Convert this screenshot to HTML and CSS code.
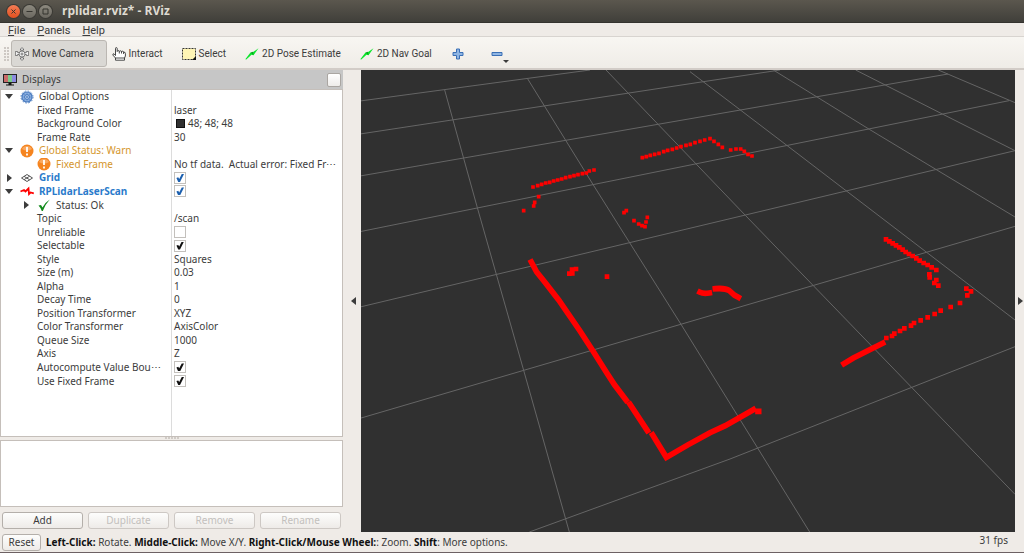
FILE: index.html
```html
<!DOCTYPE html>
<html lang="en">
<head>
    <meta charset="UTF-8">
    <meta name="viewport" content="width=device-width, initial-scale=1.0">
    <title>rplidar.rviz* - RViz</title>
    <link rel="stylesheet" href="styles.css">
</head>
<body>
    <header class="titlebar">
        <button class="win close" aria-label="Close"><svg viewBox="0 0 13 13"><path d="M4.5 4.5l4 4M8.5 4.5l-4 4"/></svg></button>
        <button class="win" aria-label="Minimize"><svg viewBox="0 0 13 13"><path d="M3.5 6.5h6"/></svg></button>
        <button class="win" aria-label="Maximize"><svg viewBox="0 0 13 13"><path d="M4 4h5v5h-5z"/></svg></button>
        <h1>rplidar.rviz* - RViz</h1>
    </header>

    <nav class="menubar">
        <a href="#"><u>F</u>ile</a>
        <a href="#"><u>P</u>anels</a>
        <a href="#"><u>H</u>elp</a>
    </nav>

    <div class="toolbar">
        <span class="grip"></span>
        <button class="tool active">
            <svg viewBox="0 0 14 14" fill="#eee" stroke="#555" stroke-width=".7"><path d="M7 .6L9 2.500H8V4H6V2.500H5zM7 13.400L9 11.500H8V10H6v1.500H5z"/><path d="M.4 4.500h2.200v1H4.500v2H2.600v1H.4zM13.600 4.500h-2.200v1H9.500v2h1.900v1h2.200z"/><circle cx="7" cy="7" r="3"/><circle cx="7" cy="7" r="1"/></svg>
            Move Camera
        </button>
        <button class="tool">
            <svg viewBox="0 0 14 14" fill="#fff" stroke="#333" stroke-width=".9"><path d="M3.500 8.500V1.500Q3.500.6 4.300.6T5.200 1.500V4.500Q5.400 3.600 6.300 3.600T7.300 4.500Q7.500 3.800 8.400 3.800T9.500 4.700Q9.800 4.200 10.600 4.200T11.600 5.200Q13.400 4.800 13.400 6.500V9L12.500 11V13.200H3.500V11L.8 8Q.8 6.500 2 6.800z"/><path d="M7.300 4.500v2M9.500 4.500v2M11.600 5v2M3.500 11h9"/></svg>
            Interact
        </button>
        <button class="tool">
            <svg viewBox="0 0 14 14"><path d="M.5 1.500h13v11h-13z" fill="#fff5b5" stroke="#333" stroke-dasharray="2 1"/><path d="M14 9v4H10z" fill="#111"/></svg>
            Select
        </button>
        <button class="tool">
            <svg viewBox="0 0 14 14"><path d="M.3 12.300L5.500 5.600 6.700 6 13.500 1.300 8.500 8.200 6.500 7.800 1.300 12.600z" fill="#0be52b"/><path d="M5.500 5.600l3 2.600-.6-3.400z" fill="#0aa51f"/></svg>
            2D Pose Estimate
        </button>
        <button class="tool">
            <svg viewBox="0 0 14 14"><path d="M.3 12.300L5.500 5.600 6.700 6 13.500 1.300 8.500 8.200 6.500 7.800 1.300 12.600z" fill="#0be52b"/><path d="M5.500 5.600l3 2.600-.6-3.400z" fill="#0aa51f"/></svg>
            2D Nav Goal
        </button>
        <button class="tool plus" aria-label="Add tool">
            <svg viewBox="0 0 14 14"><path d="M5.500 2h3v3.500H12v3H8.500V12h-3V8.500H2v-3h3.500z" fill="#8fb5e3" stroke="#3a6fb5"/></svg>
        </button>
        <button class="tool minus" aria-label="Remove tool">
            <svg viewBox="0 0 14 14"><path d="M2 5.500h10v3H2z" fill="#8fb5e3" stroke="#3a6fb5"/></svg>
            <span class="drop"></span>
        </button>
    </div>

    <main class="workspace">
        <section class="displays">
            <div class="dock-title">
                <svg viewBox="0 0 14 14"><path d="M0 1h14v9H0z" fill="#222"/><path d="M1 2h4v7H1z" fill="#c96a6a"/><path d="M5 2h4v7H5z" fill="#7cc98a"/><path d="M9 2h4v7H9z" fill="#8a8ae0"/><path d="M5.500 10h3v1.500h2.500v1H3v-1h2.500z" fill="#111"/></svg>
                <h2>Displays</h2>
                <button class="float" aria-label="Close panel"></button>
            </div>

            <div class="tree">
                <table>
                    <tbody>
                        <tr>
                            <td><div class="item"><i class="arrow open"></i><svg viewBox="0 0 14 14"><circle cx="7" cy="7" r="5" fill="#8fb2e2" stroke="#4b7cc0" stroke-width="1.200"/><circle cx="7" cy="7" r="6" fill="none" stroke="#4b7cc0" stroke-dasharray="1.600 1.540"/><circle cx="7" cy="7" r="2.500" fill="#c7d9f2" stroke="#4b7cc0"/><path d="M7 2v10M2 7h10M3.500 3.500l7 7M10.500 3.500l-7 7" stroke="#4b7cc0" stroke-width=".5"/></svg>Global Options</div></td>
                            <td></td>
                        </tr>
                        <tr><td><div class="item leaf">Fixed Frame</div></td><td>laser</td></tr>
                        <tr><td><div class="item leaf">Background Color</div></td><td><i class="swatch"></i>48; 48; 48</td></tr>
                        <tr><td><div class="item leaf">Frame Rate</div></td><td>30</td></tr>
                        <tr class="warn">
                            <td><div class="item"><i class="arrow open"></i><svg viewBox="0 0 14 14"><circle cx="7" cy="7" r="6.500" fill="#f5841f"/><path d="M2 5a5.500 5 0 0 1 10 0q-5 3-10 0z" fill="#f9a860"/><path d="M7 3v5M7 9.500v2" stroke="#fff" stroke-width="1.800"/></svg>Global Status: Warn</div></td>
                            <td></td>
                        </tr>
                        <tr class="warn">
                            <td><div class="item child"><i class="arrow"></i><svg viewBox="0 0 14 14"><circle cx="7" cy="7" r="6.500" fill="#f5841f"/><path d="M2 5a5.500 5 0 0 1 10 0q-5 3-10 0z" fill="#f9a860"/><path d="M7 3v5M7 9.500v2" stroke="#fff" stroke-width="1.800"/></svg>Fixed Frame</div></td>
                            <td>No tf data.&nbsp; Actual error: Fixed Fr⋯</td>
                        </tr>
                        <tr class="display">
                            <td><div class="item"><i class="arrow closed"></i><svg viewBox="0 0 14 14" fill="none" stroke="#555"><path d="M1.500 7L7 3.500 12.500 7 7 10.500zM4 5.300l5.700 3.500M4 8.700l5.700-3.500"/></svg><label for="grid">Grid</label></div></td>
                            <td><input type="checkbox" id="grid" checked></td>
                        </tr>
                        <tr class="display">
                            <td><div class="item"><i class="arrow open"></i><svg viewBox="0 0 14 14" fill="none" stroke="#f00" stroke-width="1.800"><path d="M.5 7.500L4 6 5.500 7.500 8.500 4.500 9 10 10.500 8.500 13.800 9.500"/></svg><label for="scan">RPLidarLaserScan</label></div></td>
                            <td><input type="checkbox" id="scan" checked></td>
                        </tr>
                        <tr>
                            <td><div class="item child"><i class="arrow closed"></i><svg viewBox="0 0 14 14"><path d="M1.500 7.500L4 7 5.500 9.500Q8.500 4 12.800 1.500 8.500 6 5.800 13H4.800Q3.500 9.500 1.500 7.500z" fill="#128a1c"/></svg>Status: Ok</div></td>
                            <td></td>
                        </tr>
                        <tr><td><div class="item leaf">Topic</div></td><td>/scan</td></tr>
                        <tr><td><div class="item leaf"><label for="unreliable">Unreliable</label></div></td><td><input type="checkbox" id="unreliable"></td></tr>
                        <tr><td><div class="item leaf"><label for="selectable">Selectable</label></div></td><td><input type="checkbox" id="selectable" checked></td></tr>
                        <tr><td><div class="item leaf">Style</div></td><td>Squares</td></tr>
                        <tr><td><div class="item leaf">Size (m)</div></td><td>0.03</td></tr>
                        <tr><td><div class="item leaf">Alpha</div></td><td>1</td></tr>
                        <tr><td><div class="item leaf">Decay Time</div></td><td>0</td></tr>
                        <tr><td><div class="item leaf">Position Transformer</div></td><td>XYZ</td></tr>
                        <tr><td><div class="item leaf">Color Transformer</div></td><td>AxisColor</td></tr>
                        <tr><td><div class="item leaf">Queue Size</div></td><td>1000</td></tr>
                        <tr><td><div class="item leaf">Axis</div></td><td>Z</td></tr>
                        <tr><td><div class="item leaf"><label for="bounds">Autocompute Value Bou⋯</label></div></td><td><input type="checkbox" id="bounds" checked></td></tr>
                        <tr><td><div class="item leaf"><label for="fixed">Use Fixed Frame</label></div></td><td><input type="checkbox" id="fixed" checked></td></tr>
                    </tbody>
                </table>
            </div>
            <div class="handle"></div>
            <div class="description"></div>
            <div class="actions">
                <button>Add</button>
                <button disabled>Duplicate</button>
                <button disabled>Remove</button>
                <button disabled>Rename</button>
            </div>
        </section>

        <button class="collapse left" aria-label="Hide left dock"></button>

        <svg class="view" viewBox="3 0 1962 1386" preserveAspectRatio="xMidYMid slice">
            <!-- ground grid -->
            <g class="grid">
                <path d="M0 93L690 0M0 192L1260 0M0 318L1764 12M0 485L1947 92M0 711L1965 242M0 1045L1965 469M508 1386L1110 1167 1965 830"/>
                <path d="M254 60L352 413 491 901 628 1386M502 25L700 345 963 763 1349 1386M738 0L1157 437 1360 647 1965 1273M990 5L1283 228 1700 547 1965 750M1240 0L1528 178 1965 441M1487 0L1747 132 1965 242M1735 0L1965 98"/>
            </g>
            <!-- laser scan -->
            <g class="scan far">
                <path d="M519 351h0M533 347h0M545 343h0M557 339h0M569 337h0M581 333h0M593 330h0M605 327h0M617 323h0M630 320h0M642 317h0M654 314h0M667 311h0M679 309h0M688 303h0M702 300h0"/>
                <path d="M536 380h0M524 397h0M521 408h0M491 422h0M799 422h0M792 428h0M822 452h0M836 462h0M846 467h0M855 470h0M858 456h0M862 442h0"/>
                <path d="M847 263h0M859 260h0M871 256h0M884 253h0M897 250h0M911 245h0M923 241h0M937 238h0M950 234h0M963 230h0M978 226h0M991 223h0M1005 218h0M1020 214h0M1034 210h0M1050 206h0M1062 214h0M1075 223h0M1087 232h0M1112 240h0M1128 237h0M1142 237h0M1153 244h0M1164 253h0M1176 258h0"/>
            </g>
            <g class="scan mid">
                <path d="M648 597h0M636 599h0M637 610h0M628 611h0M741 620h0"/>
                <path d="M1578 508h0M1588 514h0M1598 520h0M1608 526h0M1618 532h0M1628 539h0M1637 546h0M1647 552h0M1658 558h0M1669 565h0M1679 572h0M1691 579h0M1703 585h0M1715 592h0M1729 600h0M1708 613h0M1709 622h0M1729 630h0M1723 639h0M1735 647h0"/>
                <path d="M1819 656h0M1833 664h0M1822 676h0M1800 699h0M1772 711h0M1742 722h0M1724 732h0M1703 742h0M1682 751h0M1662 759h0M1653 767h0M1633 775h0M1620 783h0M1603 791h0M1596 798h0M1579 804h0"/>
            </g>
            <g class="scan near">
                <path d="M514 576L530 606 556 638 596 690 660 783 697 840 740 908 764 945 798 990M810 1003L862 1082M878 1095L919 1162 985 1124 1050 1088 1096 1067 1180 1019M1194 1024h2"/>
                <path d="M1020 667Q1030 672 1048 669M1066 656Q1095 653 1108 662L1124 676 1135 682M1452 881L1480 864 1568 820"/>
            </g>
        </svg>

        <button class="collapse right" aria-label="Hide right dock"></button>
    </main>

    <footer class="status">
        <button>Reset</button>
        <p><b>Left-Click:</b> Rotate. <b>Middle-Click:</b> Move X/Y. <b>Right-Click/Mouse Wheel:</b>: Zoom. <b>Shift</b>: More options.</p>
        <span class="fps">31 fps</span>
    </footer>
</body>
</html>
```
FILE: styles.css
```css
* {
    box-sizing: border-box;
}
html, body {
    height: 100%;
    margin: 0;
}
body {
    display: flex;
    flex-direction: column;
    font-family: "Noto Sans", sans-serif;
    font-size: 10px;
    line-height: 13px;
    color: #3c3c3c;
    background-color: #efebe7;
    border-bottom: 1px solid #6d6163;
    overflow: hidden;
}
button {
    padding: 0;
    border: 0;
    background: none;
    font: inherit;
    color: inherit;
}

/* title bar */
.titlebar {
    display: flex;
    align-items: center;
    gap: 3px;
    flex: none;
    height: 23px;
    padding-left: 7px;
    background: linear-gradient(#5b574e, #403f3a);
    border-bottom: 1px solid #34332f;
}
.titlebar h1 {
    margin: 0 0 0 7px;
    font-family: "Open Sans", sans-serif;
    font-size: 12px;
    line-height: 16px;
    color: #dfdbd2;
}
.win {
    width: 13px;
    height: 13px;
    border-radius: 50%;
    background: linear-gradient(#8c897f, #6b6860);
    box-shadow: 0 0 0 1px #3a3934;
}
.win.close {
    background: linear-gradient(#f37c55, #e2501f);
}
.win svg {
    display: block;
    fill: none;
    stroke: #35342f;
    stroke-width: 1;
}

/* menu */
.menubar {
    display: flex;
    gap: 12px;
    flex: none;
    height: 14px;
    padding: 1px 0 0 8px;
    border-bottom: 1px solid #d8d4d0;
    font-family: Roboto, sans-serif;
    font-size: 11px;
}
.menubar a {
    color: inherit;
    text-decoration: none;
}

/* toolbar */
.toolbar {
    display: flex;
    align-items: center;
    gap: 1px;
    flex: none;
    height: 33px;
    padding: 2px 0 0 4px;
    background: linear-gradient(#f8f6f2, #efece7);
    border-bottom: 2px solid #d2ccc7;
    font-family: Roboto, sans-serif;
}
.grip {
    width: 6px;
    height: 14px;
    background: radial-gradient(circle at 1px 1px, #cdc8c3 1px, transparent 1px) 0 0 / 3px 3px;
}
.tool {
    display: flex;
    align-items: center;
    gap: 3px;
    position: relative;
    height: 27px;
    padding: 0 14px 0 4px;
    border-radius: 3px;
    white-space: nowrap;
}
.tool svg {
    width: 14px;
    height: 14px;
}
.tool.active {
    padding: 0 12px 0 3px;
    border: 1px solid #bbb7b2;
    background-color: #dad8d4;
}
.tool.plus {
    padding-right: 20px;
}
.drop {
    position: absolute;
    left: 17px;
    bottom: 4px;
    border: 3px solid transparent;
    border-top-color: #3c3c3c;
    border-bottom: 0;
}

/* left dock */
.workspace {
    display: flex;
    flex: 1;
    min-height: 0;
}
.displays {
    display: flex;
    flex-direction: column;
    flex: none;
    width: 343px;
    padding-bottom: 3px;
}
.dock-title {
    display: flex;
    align-items: center;
    gap: 5px;
    flex: none;
    height: 19px;
    padding: 0 2px 0 3px;
    background-color: #c6c6c6;
}
.dock-title svg {
    width: 14px;
    height: 14px;
}
.dock-title h2 {
    flex: 1;
    margin: 0;
    font-size: 10px;
    font-weight: normal;
}
.float {
    width: 14px;
    height: 14px;
    border: 1px solid #aaa6a2;
    border-radius: 2px;
    background: linear-gradient(#fff, #eeecea);
}
.tree {
    flex: 1;
    min-height: 0;
    overflow: hidden;
    border: 1px solid #c5bfba;
    background: linear-gradient(#dcdcdc, #dcdcdc) 170px 0 / 1px 100% no-repeat #fff;
}
.tree table {
    width: 100%;
    height: 298px;
    table-layout: fixed;
    border-collapse: collapse;
}
.tree td {
    height: 13px;
    padding: 0;
    white-space: nowrap;
    overflow: hidden;
}
.tree td:first-child {
    width: 171px;
}
.tree td:last-child {
    padding-left: 2px;
}
.item {
    display: flex;
    align-items: center;
    height: 13px;
}
.item svg {
    flex: none;
    width: 14px;
    height: 14px;
    margin-right: 5px;
}
.item.child {
    padding-left: 17px;
}
.item.leaf {
    padding-left: 36px;
}
.arrow {
    flex: none;
    width: 19px;
    padding-left: 4px;
}
.arrow::before {
    content: "";
    display: block;
    width: 0;
    border: 4px solid transparent;
}
.arrow.open::before {
    border-top: 5px solid #3c3c3c;
    border-bottom: 0;
}
.arrow.closed::before {
    margin-left: 2px;
    border-left: 5px solid #3c3c3c;
    border-right: 0;
}
.warn td:first-child {
    color: #d5962c;
}
.display td:first-child {
    color: #2a7bcb;
    font-weight: bold;
}
.swatch {
    display: inline-block;
    width: 9px;
    height: 9px;
    margin: 0 3px 0 2px;
    border: 1px solid #111;
    background-color: #303030;
    vertical-align: -1px;
}
input[type="checkbox"] {
    display: block;
    appearance: none;
    width: 12px;
    height: 12px;
    margin: 0;
    border: 1px solid #c3c0bc;
    background-color: #fff;
    color: #111;
}
input[type="checkbox"]:checked::before {
    content: "";
    display: block;
    width: 8px;
    height: 8px;
    margin: 1px;
    background-color: currentColor;
    clip-path: polygon(5% 50%, 28% 42%, 40% 62%, 72% 0, 100% 0, 50% 100%, 28% 100%);
}
.display input[type="checkbox"] {
    color: #1b5fae;
}
.handle {
    flex: none;
    width: 14px;
    height: 3px;
    margin: 0 auto;
    background: radial-gradient(circle at 1px 1px, #d0cbc6 1px, transparent 1px) 0 0 / 3px 3px;
}
.description {
    flex: none;
    height: 67px;
    border: 1px solid #c5bfba;
    background-color: #fff;
}
.actions {
    display: grid;
    grid-template-columns: repeat(4, 1fr);
    gap: 5px;
    flex: none;
    padding: 5px 2px 0 2px;
}
.actions button, .status button {
    height: 17px;
    border: 1px solid #b4afaa;
    border-radius: 3px;
    background: linear-gradient(#fdfdfc, #eeebe8);
    line-height: 15px;
}
.actions button:disabled {
    border-color: #cdc8c4;
    color: #c3c0bd;
}

/* dock collapse strips */
.collapse {
    flex: none;
    width: 18px;
    padding-left: 8px;
}
.collapse::before {
    content: "";
    display: block;
    width: 0;
    border: 4px solid transparent;
}
.collapse.left::before {
    border-right: 5px solid #3c3c3c;
    border-left: 0;
}
.collapse.right {
    width: 9px;
    padding-left: 3px;
}
.collapse.right::before {
    border-left: 5px solid #3c3c3c;
    border-right: 0;
}

/* 3D view */
.view {
    flex: 1;
    min-width: 0;
    height: 100%;
    background-color: #303030;
}
.grid {
    fill: none;
    stroke: #656565;
    stroke-width: 3;
}
.scan {
    fill: none;
    stroke: #f00;
    stroke-linecap: square;
}
.far {
    stroke-width: 11;
}
.mid {
    stroke-width: 14;
}
.near {
    stroke-width: 17;
}

/* status bar */
.status {
    display: flex;
    align-items: center;
    gap: 5px;
    flex: none;
    height: 20px;
    padding: 0 16px 0 2px;
}
.status button {
    width: 39px;
}
.status p {
    flex: 1;
    margin: 0;
    white-space: nowrap;
}
.status b {
    color: #111;
}
.fps {
    align-self: flex-start;
    padding-top: 2px;
}
```
